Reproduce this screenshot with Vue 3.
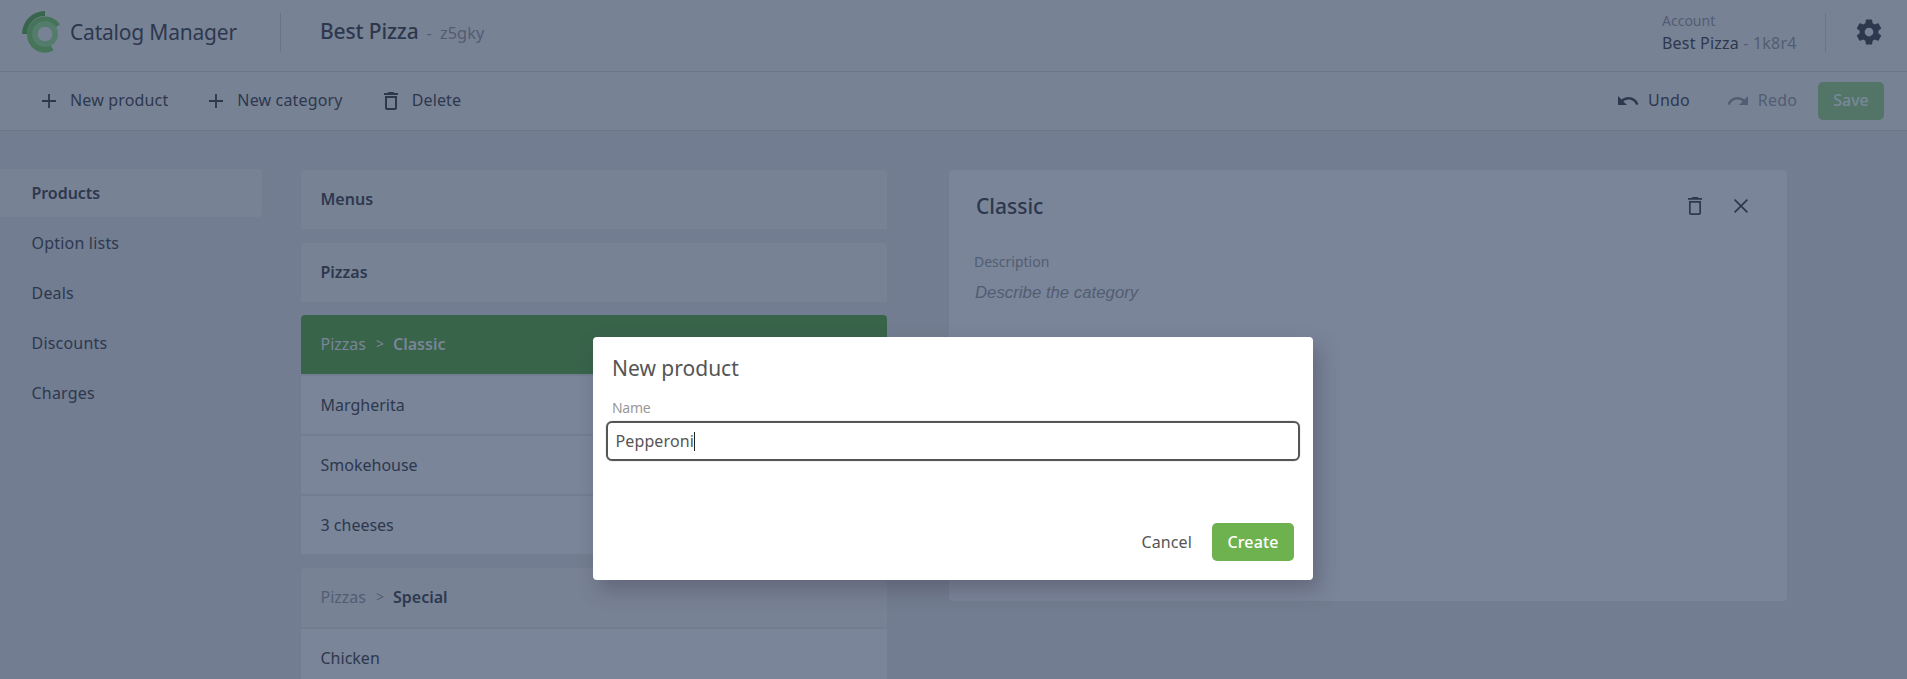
<script setup>
import { ref } from 'vue'

const sections = ['Products', 'Option lists', 'Deals', 'Discounts', 'Charges']
const active = ref('Products')
const selected = ref('Classic')
const name = 'Pepperoni'

const categories = [
  { name: 'Menus', products: [] },
  { name: 'Pizzas', products: [] },
  { name: 'Classic', parent: 'Pizzas', products: ['Margherita', 'Smokehouse', '3 cheeses'] },
  { name: 'Special', parent: 'Pizzas', products: ['Chicken'] }
]
</script>

<template>
  <div class="app">
    <header class="header">
      <svg class="logo" viewBox="0 0 40 42">
        <path d="M5 23A18 18 0 0 1 38 13.500L23 23L31.500 39.500A18 18 0 0 1 5 23Z" fill="#457459" />
        <path d="M0 23A23 23 0 0 1 23 0V5A18 18 0 0 0 5 23Z" fill="#38664c" />
        <circle cx="23" cy="23" r="13" fill="#537c6b" />
        <circle cx="23" cy="23" r="7.300" fill="#788295" />
      </svg>
      <h1 class="brand">Catalog Manager</h1>
      <span class="rule"></span>
      <div class="catalog"><b>Best Pizza</b><span>-</span><span>z5gky</span></div>
      <div class="account">
        <small>Account</small>
        <div>Best Pizza <span>- 1k8r4</span></div>
      </div>
      <span class="rule end"></span>
      <svg class="gear" viewBox="0 0 24 24"><path d="M19.430 12.980c.04-.32.07-.64.07-.98s-.03-.66-.07-.98l2.110-1.650c.19-.15.24-.42.12-.64l-2-3.460c-.12-.22-.39-.3-.61-.22l-2.490 1c-.52-.4-1.080-.73-1.690-.98l-.38-2.650C14.460 2.180 14.250 2 14 2h-4c-.25 0-.46.18-.49.42l-.38 2.650c-.61.25-1.170.59-1.690.98l-2.490-1c-.23-.09-.49 0-.61.22l-2 3.460c-.13.22-.07.49.12.64l2.110 1.650c-.04.32-.07.65-.07.98s.03.66.07.98l-2.110 1.650c-.19.15-.24.42-.12.64l2 3.460c.12.22.39.3.61.22l2.490-1c.52.4 1.080.73 1.690.98l.38 2.650c.03.24.24.42.49.42h4c.25 0 .46-.18.49-.42l.38-2.650c.61-.25 1.170-.59 1.690-.98l2.490 1c.23.09.49 0 .61-.22l2-3.460c.12-.22.07-.49-.12-.64l-2.110-1.650zM12 15.500c-1.930 0-3.500-1.570-3.500-3.500s1.570-3.500 3.500-3.500 3.500 1.570 3.500 3.500-1.570 3.500-3.500 3.500z" /></svg>
    </header>

    <div class="toolbar">
      <button class="tool"><svg viewBox="0 0 24 24"><path d="M19 12.900h-6.100V19h-1.800v-6.100H5v-1.800h6.100V5h1.800v6.100H19z" /></svg>New product</button>
      <button class="tool"><svg viewBox="0 0 24 24"><path d="M19 12.900h-6.100V19h-1.800v-6.100H5v-1.800h6.100V5h1.800v6.100H19z" /></svg>New category</button>
      <button class="tool"><svg viewBox="0 0 24 24"><path d="M6 19c0 1.100.9 2 2 2h8c1.100 0 2-.9 2-2V7H6v12zM8 9h8v10H8V9zm7.500-5l-1-1h-5l-1 1H5v2h14V4z" /></svg>Delete</button>
      <span class="grow"></span>
      <button class="tool undo"><svg viewBox="0 0 24 24"><path d="M12.500 8c-2.650 0-5.050.99-6.900 2.600L2 7v9h9l-3.620-3.620c1.390-1.160 3.160-1.880 5.120-1.880 3.540 0 6.550 2.310 7.600 5.500l2.370-.78C21.080 11.030 17.150 8 12.500 8z" /></svg>Undo</button>
      <button class="tool redo"><svg viewBox="0 0 24 24"><path d="M18.400 10.600C16.550 8.990 14.150 8 11.500 8c-4.650 0-8.580 3.030-9.960 7.220L3.900 16c1.050-3.190 4.050-5.500 7.600-5.500 1.950 0 3.730.72 5.120 1.880L13 16h9V7l-3.600 3.600z" /></svg>Redo</button>
      <button class="save">Save</button>
    </div>

    <main class="main">
      <nav class="nav">
        <a v-for="s in sections" :key="s" :class="{ active: s === active }" @click="active = s">{{ s }}</a>
      </nav>

      <div class="list">
        <section v-for="c in categories" :key="c.name" class="group">
          <div class="row head" :class="{ selected: c.name === selected }">
            <template v-if="c.parent"><span class="parent">{{ c.parent }}</span><span class="sep">&gt;</span></template>
            <b>{{ c.name }}</b>
          </div>
          <div v-for="p in c.products" :key="p" class="row">{{ p }}</div>
        </section>
      </div>

      <section class="panel">
        <div class="panel-head">
          <h2>Classic</h2>
          <svg viewBox="0 0 24 24"><path d="M6 19c0 1.100.9 2 2 2h8c1.100 0 2-.9 2-2V7H6v12zM7.700 8.700h8.600v10.600H7.700V8.700zm7.800-4.700l-1-1h-5l-1 1H5v1.800h14V4z" /></svg>
          <svg viewBox="0 0 24 24"><path d="M19 6.200L17.800 5 12 10.800 6.200 5 5 6.200 10.800 12 5 17.800 6.200 19 12 13.200 17.800 19 19 17.800 13.200 12z" /></svg>
        </div>
        <div class="label">Description</div>
        <div class="placeholder">Describe the category</div>
      </section>
    </main>

    <div class="overlay">
      <div class="modal">
        <h3>New product</h3>
        <div class="label">Name</div>
        <div class="field">{{ name }}<i class="caret"></i></div>
        <div class="actions">
          <button class="cancel">Cancel</button>
          <button class="create">Create</button>
        </div>
      </div>
    </div>
  </div>
</template>

<style>
body { margin: 0; background: #727d91; overflow: hidden; }
</style>

<style scoped>
.app {
  box-sizing: border-box;
  height: 679px;
  overflow: hidden;
  background: #727d91;
  color: #2d384e;
  font: 16px/24px "Noto Sans", "Open Sans", sans-serif;
  letter-spacing: .12px;
}
h1, h2, h3 { margin: 0; }
svg { display: block; flex: none; fill: currentColor; }
button { border: 0; padding: 0; background: none; color: inherit; font: inherit; letter-spacing: inherit; }
.header {
  box-sizing: border-box;
  display: flex;
  align-items: center;
  height: 72px;
  padding: 0 23px 7px 22px;
  background: #788295;
  border-bottom: 1px solid #6c768b;
}
.logo { width: 40px; height: 42px; }
.brand { width: 210px; margin-left: 8px; font-size: 21px; font-weight: 400; line-height: 32px; letter-spacing: -.2px; white-space: nowrap; }
.rule { width: 1px; height: 39px; background: #6a7489; }
.catalog { display: flex; align-items: baseline; margin-left: 39px; color: #525d73; }
.catalog b { margin-right: 8px; color: #2d384e; font-size: 21px; font-weight: 500; letter-spacing: -.15px; }
.catalog span { margin-right: 8px; font-size: 16.300px; }
.account { margin-left: auto; width: 163px; line-height: 24px; letter-spacing: .2px; }
.account small { display: block; font-size: 14px; line-height: 21px; letter-spacing: 0; color: #525d73; }
.account span { color: #525d73; }
.gear { width: 30px; height: 30px; margin-left: 28px; }
.toolbar {
  box-sizing: border-box;
  display: flex;
  align-items: center;
  height: 59px;
  padding: 0 23px 0 37px;
  background: #788295;
  border-bottom: 1px solid #6c768b;
  letter-spacing: .16px;
}
.tool { display: flex; align-items: center; gap: 9px; height: 24px; margin-right: 36px; line-height: 22px; padding-bottom: 2px; }
.tool svg { width: 24px; height: 24px; margin-top: 2px; }
.grow { flex: 1; }
.undo, .redo { gap: 8px; }
.redo { margin-right: 21px; color: #525d73; }
.save, .create { height: 38px; border-radius: 5px; font-weight: 500; }
.save { width: 66px; padding-bottom: 2px; background: #527568; color: #7a8899; letter-spacing: 0; }
.main { display: flex; align-items: flex-start; padding-top: 38px; }
.nav { width: 262px; display: grid; gap: 2px; }
.nav a { height: 48px; padding-left: 31.500px; line-height: 48px; border-radius: 0 4px 4px 0; letter-spacing: .2px; }
.nav .active { background: #788295; font-weight: 600; letter-spacing: -.05px; }
.list { width: 586px; margin: 1px 0 0 39px; display: grid; gap: 13.500px; }
.group { display: grid; gap: 2px; border-radius: 4px 4px 0 0; overflow: hidden; }
.row { height: 58px; padding-left: 19.500px; line-height: 58px; background: #7a8599; letter-spacing: 0; }
.head { display: flex; height: 59px; background: #788295; }
.head b { font-weight: 600; }
.head.selected { background: #38644a; color: #7a8599; }
.parent, .sep { color: #525d73; }
.selected .parent, .selected .sep { color: inherit; }
.sep { margin: 0 9px 0 10px; font-size: 14px; }
.panel { box-sizing: border-box; width: 838px; height: 431px; margin: 1px 0 0 62px; padding: 24px 34px 0 26px; border-radius: 4px; background: #7a8599; }
.panel-head { display: flex; align-items: center; height: 24px; }
.panel-head h2 { flex: 1; padding-left: 1px; font-size: 21px; font-weight: 500; letter-spacing: 0; }
.panel-head svg { width: 24px; height: 24px; margin-left: 22px; }
.label { font-size: 14px; line-height: 20px; letter-spacing: 0; }
.panel .label { margin: 34px 0 0 -1px; color: #525d73; }
.placeholder { margin-top: 9px; font: italic 16.800px/24px "Liberation Sans", Arial, sans-serif; letter-spacing: 0; color: #525d73; }
.overlay { position: absolute; inset: 0; display: flex; align-items: flex-start; justify-content: center; }
.modal {
  box-sizing: border-box;
  width: 720px;
  height: 243px;
  margin: 337px 1px 0 0;
  padding: 15px 13px 0;
  border-radius: 4px;
  background: #fff;
  color: #555;
  box-shadow: 6px 10px 20px rgba(60, 50, 70, .34);
}
.modal h3 { padding-left: 6px; font-size: 21px; font-weight: 400; line-height: 32px; letter-spacing: 0; }
.modal .label { margin: 14px 0 3px 6px; color: #999; letter-spacing: -.3px; }
.field { display: flex; align-items: center; box-sizing: border-box; height: 40px; padding-left: 7.500px; border: 2px solid #555; border-radius: 6px; box-shadow: 0 0 1px #777; }
.caret { width: 1px; height: 19px; background: #222; }
.actions { display: flex; justify-content: flex-end; align-items: center; gap: 20px; margin: 62px 6px 0; }
.create { width: 82px; background: #6eb14f; color: #fff; }
</style>
